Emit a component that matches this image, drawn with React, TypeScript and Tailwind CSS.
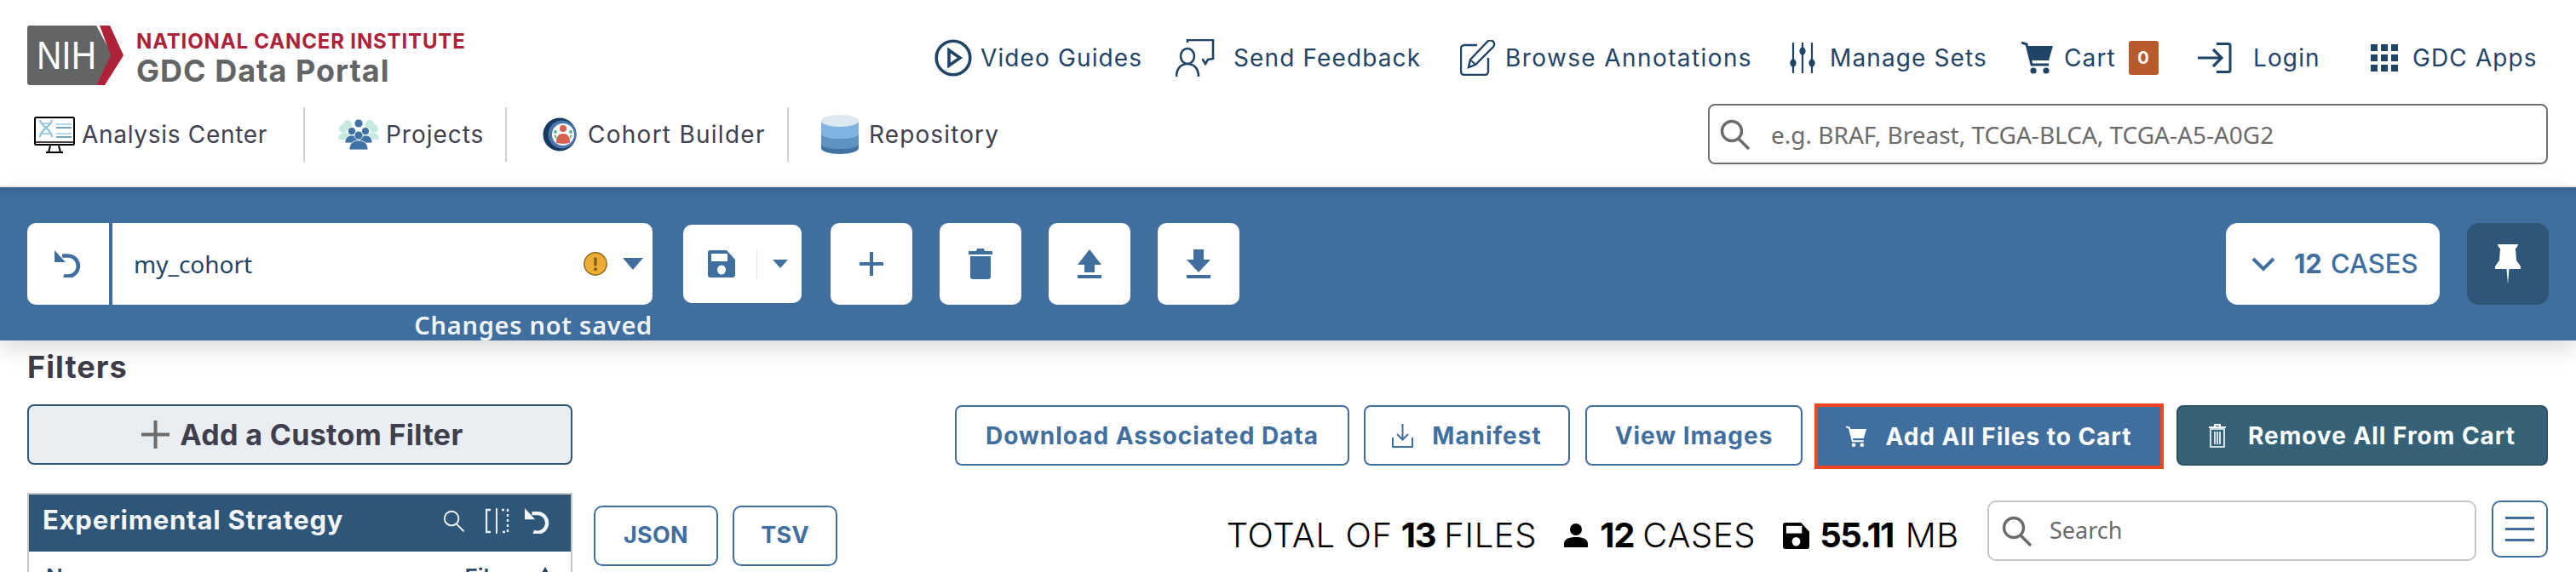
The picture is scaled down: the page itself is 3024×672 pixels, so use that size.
import React from "react";

const SaveIcon = ({ c, w, h }: { c: string; w: number; h: number }) => (
  <svg width={w} height={h} viewBox="0 0 32 32" className="shrink-0">
    <path d="M3 0H22L32 11V29a3 3 0 0 1-3 3H3a3 3 0 0 1-3-3V3a3 3 0 0 1 3-3z" fill={c} />
    <rect x="4" y="4" width="19" height="9" fill="#fff" />
    <ellipse cx="16" cy="23" rx="5" ry="5.5" fill="#fff" />
  </svg>
);

const UndoIcon = ({ c, w, h, sw = 4.6 }: { c: string; w: number; h: number; sw?: number }) => (
  <svg width={w} height={h} viewBox="0 0 32 32" fill="none" className="shrink-0">
    <path d="M9 6.5h7a12 12 0 1 1-5 23" stroke={c} strokeWidth={sw} />
    <path d="M0 0v14h13z" fill={c} />
  </svg>
);

const CartIcon = ({ c, w, h }: { c: string; w: number; h: number }) => (
  <svg width={w} height={h} viewBox="0 0 37 38" className="shrink-0">
    <path d="M0 1l6 2 6 24h20" fill="none" stroke={c} strokeWidth="3" />
    <path d="M7 5H37L32 22H11z" fill={c} />
    <circle cx="14" cy="34" r="3.6" fill={c} />
    <circle cx="29" cy="34" r="3.6" fill={c} />
  </svg>
);

const SearchIcon = ({ c, s, sw = 3.4 }: { c: string; s: number; sw?: number }) => (
  <svg width={s} height={s} viewBox="0 0 36 36" fill="none" className="shrink-0">
    <circle cx="14" cy="14" r="11.5" stroke={c} strokeWidth={sw} />
    <path d="M22 23l12 12" stroke={c} strokeWidth={sw} />
  </svg>
);

const nav = "#1f4468";

const PlayIcon = () => (
  <svg width="44" height="44" viewBox="0 0 44 44" fill="none" className="shrink-0">
    <circle cx="22" cy="22" r="19.8" stroke={nav} strokeWidth="3.6" />
    <path d="M17 13l13 9-13 9z" stroke={nav} strokeWidth="3.6" />
  </svg>
);
const FeedbackIcon = () => (
  <svg width="46" height="44" viewBox="0 0 46 44" fill="none" className="shrink-0">
    <path d="M14 4V1h30v22l-6 1-3 5-3-5h-1" stroke={nav} strokeWidth="2.6" />
    <ellipse cx="14" cy="20" rx="8" ry="9" stroke={nav} strokeWidth="2.6" />
    <path d="M1 44c0-9 5-15 13-15s13 6 13 15" stroke={nav} strokeWidth="2.6" />
  </svg>
);
const EditIcon = () => (
  <svg width="42" height="42" viewBox="0 0 42 42" fill="none" className="shrink-0">
    <path d="M20 6H5a4 4 0 0 0-4 4v27a4 4 0 0 0 4 4h24a4 4 0 0 0 4-4V21" stroke={nav} strokeWidth="2.4" />
    <path d="M10 32l2-9L32 2a3 3 0 0 1 7 6L18 29z" stroke={nav} strokeWidth="2.4" />
    <path d="M13 24l5 5" stroke={nav} strokeWidth="2" />
  </svg>
);
const SlidersIcon = () => (
  <svg width="30" height="36" viewBox="0 0 30 36" fill="none" className="shrink-0">
    <path d="M4 0v36M15 0v36M26 0v36" stroke={nav} strokeWidth="2.2" />
    <ellipse cx="4" cy="24" rx="3.6" ry="4.6" fill={nav} />
    <ellipse cx="15" cy="10" rx="3.6" ry="4.6" fill={nav} />
    <ellipse cx="26" cy="24" rx="3.6" ry="4.6" fill={nav} />
  </svg>
);
const LoginIcon = () => (
  <svg width="40" height="36" viewBox="0 0 40 36" fill="none" className="shrink-0">
    <path d="M22 1.500h14a2 2 0 0 1 2 2v29a2 2 0 0 1-2 2H22" stroke={nav} strokeWidth="3" />
    <path d="M0 18h27M18 8l10 10-10 10" stroke={nav} strokeWidth="3.2" />
  </svg>
);
const AppsIcon = () => (
  <svg width="32" height="32" viewBox="0 0 32 32" className="shrink-0" fill={nav}>
    <rect x="0" y="0" width="8" height="8" /><rect x="12" y="0" width="8" height="8" /><rect x="24" y="0" width="8" height="8" />
    <rect x="0" y="12" width="8" height="8" /><rect x="12" y="12" width="8" height="8" /><rect x="24" y="12" width="8" height="8" />
    <rect x="0" y="24" width="8" height="8" /><rect x="12" y="24" width="8" height="8" /><rect x="24" y="24" width="8" height="8" />
  </svg>
);

const Logo = () => (
  <svg width="113" height="70" viewBox="0 0 113 70" className="shrink-0">
    <path d="M3 0H81L100 35 81 70H3a3 3 0 0 1-3-3V3a3 3 0 0 1 3-3z" fill="#636466" />
    <path d="M85 0h12l16 35-22 35H81l17-35z" fill="#ae2138" />
    <text x="11" y="51" fill="#fff" fontFamily="Liberation Sans, sans-serif" fontSize="47" textLength="70" lengthAdjust="spacingAndGlyphs">NIH</text>
  </svg>
);

const AnalysisIcon = () => (
  <svg width="48" height="43" viewBox="0 0 48 43" fill="none" className="shrink-0">
    <rect x="1" y="1" width="46" height="32" rx="1.500" stroke="#000" strokeWidth="2" />
    <path d="M1 30h46" stroke="#000" strokeWidth="1.6" />
    <path d="M7 4c0 7 14 11 14 20M21 4C21 11 7 15 7 24" stroke="#8ec2dd" strokeWidth="2.2" />
    <path d="M9 8h10M9 20h10" stroke="#8ec2dd" strokeWidth="1.6" />
    <path d="M26 9h18M26 20h18" stroke="#9ccbe2" strokeWidth="1.6" />
    <path d="M26 13h18M26 24h18" stroke="#4d88a6" strokeWidth="1.6" />
    <path d="M19 34l-2 8h14l-2-8M14 42h20" stroke="#000" strokeWidth="2" />
  </svg>
);
const ProjectsIcon = () => (
  <svg width="48" height="36" viewBox="0 0 48 36" className="shrink-0">
    <g fill="#c5eae2">
      <circle cx="11" cy="6" r="5" /><circle cx="37" cy="6" r="5" /><circle cx="6" cy="11" r="5" /><circle cx="42" cy="11" r="5" />
      <path d="M0 24c0-6 4-8 8-8h32c4 0 8 2 8 8z" />
    </g>
    <g fill="#3f72a5" stroke="#fff" strokeWidth="0.8">
      <circle cx="24" cy="5" r="5" /><circle cx="16" cy="14" r="4.6" /><circle cx="32" cy="14" r="4.6" />
      <path d="M8 28c0-7 4-9 8-9s8 2 8 9zM24 28c0-7 4-9 8-9s8 2 8 9z" />
      <circle cx="24" cy="19" r="5" />
      <path d="M13 36c0-8 5-11 11-11s11 3 11 11z" />
    </g>
  </svg>
);
const CohortIcon = () => (
  <svg width="40" height="40" viewBox="0 0 40 40" className="shrink-0">
    <circle cx="20" cy="20" r="19.500" fill="#16395f" />
    <circle cx="23" cy="20" r="16.500" fill="#4a74ad" />
    <circle cx="24" cy="20" r="13" fill="#fff" />
    <circle cx="24" cy="13" r="4" fill="#d95f50" />
    <circle cx="15" cy="17" r="2" fill="#5cb98c" /><circle cx="33" cy="17" r="2" fill="#5cb98c" />
    <path d="M13 21h3l1 6zM35 21h-3l-1 6z" fill="#5cb98c" />
    <path d="M16 30c0-8 3-11 8-11s8 3 8 11c-2 1-14 1-16 0z" fill="#d95f50" />
  </svg>
);
const RepoIcon = () => (
  <svg width="44" height="46" viewBox="0 0 44 46" className="shrink-0">
    <path d="M0 32h44v7c0 4-10 7-22 7S0 43 0 39z" fill="#4373a3" />
    <path d="M0 20h44v14c0 4-10 6-22 6S0 38 0 34z" fill="#5d93c1" />
    <path d="M0 8h44v14c0 4-10 6-22 6S0 26 0 22z" fill="#7fb3e0" />
    <ellipse cx="22" cy="7" rx="22" ry="7" fill="#dbe8f0" />
  </svg>
);

const NavSep = () => <div className="h-[64px] w-[2px] shrink-0 bg-[#cfd3d8]" />;

const SqBtn = ({ children }: { children: React.ReactNode }) => (
  <div className="flex h-[96px] w-[96px] shrink-0 items-center justify-center rounded-[10px] bg-white">{children}</div>
);

export default function App() {
  return (
    <div className="h-[672px] w-[3024px] overflow-hidden bg-white font-['Inter',sans-serif]">
      {/* header */}
      <header className="h-[220px] border-b-2 border-[#eeeeee]">
        <div className="flex h-[122px] items-start">
          <div className="ml-[32px] mt-[30px] flex">
            <Logo />
            <div className="ml-[15px]">
              <div className="mt-[7px] whitespace-nowrap text-[24px] font-bold leading-[24px] tracking-[0.035em] text-[#ae2138]">NATIONAL CANCER INSTITUTE</div>
              <div className="mt-[2px] whitespace-nowrap text-[36px] font-bold leading-[40px] tracking-[0.028em] text-[#636466]">GDC Data Portal</div>
            </div>
          </div>
          <nav className="ml-auto mr-[48px] mt-[46px] flex h-[44px] items-center text-[28px] tracking-[0.04em] text-[#1f4468]">
            <PlayIcon />
            <span className="ml-[10px] w-[187px] whitespace-nowrap">Video Guides</span>
            <div className="ml-[42px]"><FeedbackIcon /></div>
            <span className="ml-[22px] w-[220px] whitespace-nowrap">Send Feedback</span>
            <div className="ml-[46px]"><EditIcon /></div>
            <span className="ml-[11px] w-[287px] whitespace-nowrap tracking-[0.05em]">Browse Annotations</span>
            <div className="ml-[47px]"><SlidersIcon /></div>
            <span className="ml-[17px] w-[182px] whitespace-nowrap">Manage Sets</span>
            <div className="ml-[43px]"><CartIcon c={nav} w={37} h={38} /></div>
            <span className="ml-[13px] w-[59px] whitespace-nowrap">Cart</span>
            <div className="ml-[17px] flex h-[40px] w-[35px] items-center justify-center rounded-[3px] bg-[#b85a2b] text-[20px] font-bold text-white">0</div>
            <div className="ml-[46px]"><LoginIcon /></div>
            <span className="ml-[25px] w-[78px] whitespace-nowrap">Login</span>
            <div className="ml-[60px]"><AppsIcon /></div>
            <span className="ml-[17px] w-[144px] whitespace-nowrap">GDC Apps</span>
          </nav>
        </div>
        <div className="flex h-[96px] items-start">
          <div className="ml-[40px] mt-[4px] flex h-[64px] items-center text-[28px] tracking-[0.035em] text-[#40404f]">
            <AnalysisIcon />
            <span className="ml-[8px] w-[218px] whitespace-nowrap tracking-[0.025em]">Analysis Center</span>
            <div className="ml-[42px]"><NavSep /></div>
            <div className="ml-[39px]"><ProjectsIcon /></div>
            <span className="ml-[8px] w-[115px] whitespace-nowrap">Projects</span>
            <div className="ml-[25px]"><NavSep /></div>
            <div className="ml-[42px]"><CohortIcon /></div>
            <span className="ml-[13px] w-[208px] whitespace-nowrap tracking-[0.045em]">Cohort Builder</span>
            <div className="ml-[26px]"><NavSep /></div>
            <div className="ml-[38px]"><RepoIcon /></div>
            <span className="ml-[12px] w-[153px] whitespace-nowrap tracking-[0.04em]">Repository</span>
          </div>
          <div className="ml-auto mr-[33px] flex h-[71px] w-[986px] items-center rounded-[8px] border-2 border-[#707070] pl-[12px]">
            <SearchIcon c="#6b6b6b" s={36} />
            <span className="ml-[24px] whitespace-nowrap font-['Noto_Sans',sans-serif] text-[28px] text-[#6b6b6b]">e.g. BRAF, Breast, TCGA-BLCA, TCGA-A5-A0G2</span>
          </div>
        </div>
      </header>

      {/* cohort bar */}
      <section className="relative z-10 flex h-[180px] bg-[#406f9f] pl-[32px] pr-[32px] pt-[42px] shadow-[inset_0_10px_10px_-8px_rgba(30,60,90,0.45),0_10px_24px_rgba(0,0,0,0.14)]">
        <div className="w-[734px] shrink-0">
          <div className="flex h-[96px] overflow-hidden rounded-[10px] bg-white">
            <div className="flex w-[100px] items-center justify-center border-r-4 border-[#406f9f]">
              <UndoIcon c="#406f9f" w={32} h={32} />
            </div>
            <div className="flex flex-1 items-center pl-[25px] pr-[11px] font-['Noto_Sans',sans-serif] text-[28px] text-[#1f4468]">
              <span>my_cohort</span>
              <svg width="28" height="28" viewBox="0 0 28 28" className="ml-auto shrink-0">
                <circle cx="14" cy="14" r="13.200" fill="#efac35" stroke="#8a6a22" strokeWidth="1.4" />
                <rect x="12.400" y="6.500" width="3.200" height="10" rx="1" fill="#7c5c1a" />
                <circle cx="14" cy="20.200" r="1.900" fill="#7c5c1a" />
              </svg>
              <svg width="24" height="14" viewBox="0 0 24 14" className="ml-[18px] shrink-0">
                <path d="M0 0h24L12 14z" fill="#406f9f" />
              </svg>
            </div>
          </div>
          <div className="mt-[8px] whitespace-nowrap text-right font-['Noto_Sans',sans-serif] text-[29px] font-semibold leading-[32px] tracking-[0.025em] text-[#f0f3f6]">Changes not saved</div>
        </div>

        <div className="ml-[36px] mt-[2px] flex h-[92px] w-[139px] shrink-0 items-center rounded-[10px] bg-white pl-[29px]">
          <SaveIcon c="#406f9f" w={32} h={32} />
          <div className="ml-[25px] h-[35px] w-[1px] bg-[#dfe3e7]" />
          <svg width="18" height="10" viewBox="0 0 18 10" className="ml-[18px] shrink-0">
            <path d="M0 0h18L9 10z" fill="#406f9f" />
          </svg>
        </div>
        <div className="ml-[34px] flex gap-[32px]">
          <SqBtn>
            <svg width="28" height="28" viewBox="0 0 28 28">
              <path d="M12 0h4v12h12v4H16v12h-4V16H0v-4h12z" fill="#406f9f" />
            </svg>
          </SqBtn>
          <SqBtn>
            <svg width="28" height="36" viewBox="0 0 28 36">
              <path d="M0 3h9l1-3h8l1 3h9v4H0zM2 9h24v24a3 3 0 0 1-3 3H5a3 3 0 0 1-3-3z" fill="#406f9f" />
            </svg>
          </SqBtn>
          <SqBtn>
            <svg width="28" height="34" viewBox="0 0 28 34">
              <path d="M14 0l14 18h-8v9H8v-9H0zM0 30h28v4H0z" fill="#406f9f" />
            </svg>
          </SqBtn>
          <SqBtn>
            <svg width="28" height="34" viewBox="0 0 28 34">
              <path d="M8 0h12v12h8L14 27 0 12h8zM0 30h28v4H0z" fill="#406f9f" />
            </svg>
          </SqBtn>
        </div>

        <div className="ml-auto flex h-[96px] w-[251px] shrink-0 items-center rounded-[14px] bg-white pl-[30px] text-[31px] text-[#406f9f]">
          <svg width="28" height="17" viewBox="0 0 28 17" fill="none" className="shrink-0">
            <path d="M2 2l12 12L26 2" stroke="#406f9f" strokeWidth="4" />
          </svg>
          <span className="ml-[22px] font-bold">12</span>
          <span className="ml-[10px] whitespace-nowrap font-medium">CASES</span>
        </div>
        <div className="ml-[32px] flex h-[96px] w-[96px] shrink-0 items-center justify-center rounded-[14px] bg-[#2e5679]">
          <svg width="30" height="47" viewBox="0 0 30 47">
            <path d="M3 0h24l-1 3-2 2 1 14 5 7v3H0v-3l5-7 1-14-2-2z" fill="#fff" />
            <path d="M13.500 29h3L15 47z" fill="#fff" />
          </svg>
        </div>
      </section>

      {/* main */}
      <div className="flex">
        <aside className="ml-[32px] w-[640px] shrink-0">
          <h2 className="mt-[12px] text-[36px] font-bold leading-[38px] tracking-[0.03em] text-[#3c3c4a]">Filters</h2>
          <div className="mt-[25px] flex h-[71px] items-center justify-center rounded-[8px] border-2 border-[#2e5679] bg-[#e9eef3] pl-[6px] text-[34px] font-bold tracking-[0.01em] text-[#3f3f4d]">
            <svg width="33" height="33" viewBox="0 0 33 33" className="shrink-0">
              <path d="M14.500 0h4v14.500H33v4H18.500V33h-4V18.500H0v-4h14.500z" fill="#6b6b6b" />
            </svg>
            <span className="ml-[12px] whitespace-nowrap">Add a Custom Filter</span>
          </div>
          <div className="mt-[33px] border-x-2 border-t-2 border-[#c4c4c4]">
            <div className="flex h-[67px] items-center bg-[#2e5679] pb-[6px] pl-[16px] text-[31px] font-bold tracking-[0.025em] text-[#f2f4f6]">
              <span className="whitespace-nowrap">Experimental Strategy</span>
              <div className="ml-auto mr-[24px] flex items-center">
                <SearchIcon c="#f2f4f6" s={26} sw={2.6} />
                <svg width="28" height="30" viewBox="0 0 28 30" fill="none" className="ml-[24px] shrink-0">
                  <path d="M6 2H1v26h5" stroke="#e8edf2" strokeWidth="2.4" />
                  <path d="M13 0v30" stroke="#e8edf2" strokeWidth="2" />
                  <path d="M19 2h7v26h-7" stroke="#e8edf2" strokeWidth="2.4" strokeDasharray="3 3" />
                </svg>
                <div className="ml-[18px]"><UndoIcon c="#f2f4f6" w={30} h={30} /></div>
              </div>
            </div>
            <div className="flex h-[40px] items-start pl-[20px] pr-[22px] pt-[14px] text-[26px] font-semibold leading-[32px] text-[#2e4a68]">
              <span>Name</span>
              <span className="ml-auto">Files</span>
              <svg width="16" height="14" viewBox="0 0 16 14" className="ml-[28px] mt-[4px] shrink-0">
                <path d="M0 14L8 0l8 14z" fill="#1f4468" />
              </svg>
            </div>
          </div>
        </aside>

        <main className="ml-[25px] mr-[33px] flex-1">
          <div className="mt-[74px] flex h-[77px] items-center justify-end text-[28px] font-bold tracking-[0.035em]">
            <div className="mb-[2px] flex h-[71px] w-[463px] items-center justify-center rounded-[8px] border-2 border-[#406f9f] text-[#406f9f]">
              <span className="whitespace-nowrap">Download Associated Data</span>
            </div>
            <div className="mb-[2px] ml-[17px] flex h-[71px] w-[242px] items-center justify-center rounded-[8px] border-2 border-[#406f9f] text-[#406f9f]">
              <svg width="25" height="28" viewBox="0 0 25 28" fill="none" className="shrink-0">
                <path d="M12.500 0v18M6 12l6.500 6.500L19 12M1 16v11h23V16" stroke="#406f9f" strokeWidth="2" />
              </svg>
              <span className="ml-[22px] whitespace-nowrap">Manifest</span>
            </div>
            <div className="mb-[2px] ml-[18px] flex h-[71px] w-[255px] items-center justify-center rounded-[8px] border-2 border-[#406f9f] text-[#406f9f]">
              <span className="whitespace-nowrap">View Images</span>
            </div>
            <div className="ml-[14px] flex h-[77px] w-[410px] items-center justify-center border-[4px] border-[#ee4526] bg-[#406f9f] text-white">
              <CartIcon c="#fff" w={24} h={26} />
              <span className="ml-[22px] whitespace-nowrap">Add All Files to Cart</span>
            </div>
            <div className="mb-[2px] ml-[15px] flex h-[71px] w-[436px] items-center justify-center rounded-[8px] border-2 border-[#2c5264] bg-[#356277] text-white">
              <svg width="20" height="28" viewBox="0 0 20 28" fill="none" className="shrink-0">
                <path d="M0 4h20M7 4V1h6v3" stroke="#fff" strokeWidth="2" />
                <path d="M2 6h16v21H2zM7 9v15M10 9v15M13 9v15" stroke="#fff" strokeWidth="1.6" />
              </svg>
              <span className="ml-[26px] whitespace-nowrap">Remove All From Cart</span>
            </div>
          </div>
          <div className="mt-[37px] flex items-start">
            <div className="mt-[6px] flex h-[71px] w-[146px] items-center justify-center rounded-[10px] border-2 border-[#406f9f] text-[27px] font-bold tracking-[0.01em] text-[#406f9f]">JSON</div>
            <div className="ml-[17px] mt-[6px] flex h-[71px] w-[123px] items-center justify-center rounded-[10px] border-2 border-[#406f9f] text-[27px] font-bold tracking-[0.01em] text-[#406f9f]">TSV</div>
            <div className="ml-auto mt-[19px] flex h-[44px] items-center whitespace-nowrap text-[40px] font-light tracking-[0.016em] text-black">
              <span>TOTAL OF</span>
              <span className="ml-[10px] font-bold tracking-[-0.03em]">13</span>
              <span className="ml-[10px]">FILES</span>
              <svg width="28" height="28" viewBox="0 0 28 28" className="ml-[32px] shrink-0">
                <circle cx="14" cy="7" r="7" fill="#000" />
                <path d="M0 28v-4c0-6 6-8 14-8s14 2 14 8v4z" fill="#000" />
              </svg>
              <span className="ml-[14px] font-bold tracking-[-0.03em]">12</span>
              <span className="ml-[10px]">CASES</span>
              <div className="ml-[32px]"><SaveIcon c="#000" w={31} h={31} /></div>
              <span className="ml-[12px] font-bold tracking-[-0.04em]">55.11</span>
              <span className="ml-[14px]">MB</span>
            </div>
            <div className="ml-[33px] flex h-[71px] w-[574px] items-center rounded-[10px] border-2 border-[#c6c6c6] pl-[15px]">
              <SearchIcon c="#6b6b6b" s={36} />
              <span className="ml-[20px] font-['Noto_Sans',sans-serif] text-[27px] text-[#6b6b6b]">Search</span>
            </div>
            <div className="ml-[18px] flex h-[67px] w-[66px] flex-col items-center justify-center gap-[10px] rounded-[10px] border-2 border-[#406f9f]">
              <div className="h-[3px] w-[34px] bg-[#406f9f]" />
              <div className="h-[3px] w-[34px] bg-[#406f9f]" />
              <div className="h-[3px] w-[34px] bg-[#406f9f]" />
            </div>
          </div>
        </main>
      </div>
    </div>
  );
}
